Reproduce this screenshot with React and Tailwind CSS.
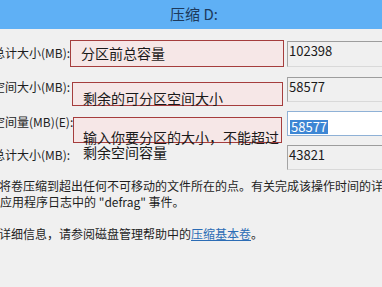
const rows = [
  { label: '压缩前的总计大小(MB):', value: '102398' },
  { label: '可用压缩空间大小(MB):', value: '58577' },
  { label: '输入压缩空间量(MB)(E):', value: '58577' },
  { label: '压缩后的总计大小(MB):', value: '43821' },
];

const Field = ({ value, className = '' }) => (
  <div className={`mt-[1px] w-[110px] shrink-0 border-t border-l border-b border-t-[#9d9d9d] border-l-[#a4a4a4] border-b-[#d9d9d9] bg-[#f0f0f0] pl-[1px] pt-[1px] text-[13px] leading-[16px] text-[#1b1b1b] ${className}`}>
    {value}
  </div>
);

const Label = ({ children, pt }) => (
  <div className={`ml-[-55px] w-[125px] shrink-0 whitespace-nowrap text-[12px] leading-[16px] text-[#1e1e1e] ${pt}`}>
    {children}
  </div>
);

const App = () => {
  return (
    <div className="w-[382px] h-[287px] overflow-hidden bg-[#f0f0f0] flex flex-col font-['Noto_Sans_CJK_SC',sans-serif]">
      {/* title bar */}
      <div className="h-[29px] shrink-0 bg-[#5fb0f5] flex items-center justify-center pl-[6px] text-[15px] text-[#1d3a5c]">
        压缩 D:
      </div>

      <div className="pt-[11px]">
        {/* row 1 */}
        <div className="flex h-[36px]">
          <Label pt="pt-[5px]">{rows[0].label}</Label>
          <div className="w-[217px] shrink-0">
            <div className="w-[214px] h-[27px] border border-[#a53d3d] bg-[#f6e7e7] pl-[10px] flex items-center text-[14px] text-[#1a1a1a]">
              分区前总容量
            </div>
          </div>
          <Field value={rows[0].value} className="h-[26px]" />
        </div>

        {/* row 2 */}
        <div className="flex h-[34px]">
          <Label pt="pt-[3px]">{rows[1].label}</Label>
          <div className="w-[217px] shrink-0">
            <div className="mt-[6px] ml-[2px] w-[211px] h-[24px] border border-[#a53d3d] bg-[#f6e7e7] pl-[10px] pt-[6px] text-[14px] leading-[18px] text-[#1a1a1a]">
              剩余的可分区空间大小
            </div>
          </div>
          <Field value={rows[1].value} className="h-[25px]" />
        </div>

        {/* row 3 */}
        <div className="flex h-[34px]">
          <Label pt="pt-[4px]">{rows[2].label}</Label>
          <div className="w-[217px] shrink-0">
            <div className="mt-[7px] ml-[3px] w-[209px] h-[26px] border border-[#a53d3d] bg-[#f6e7e7] pl-[9px] pt-[12px] text-[14px] leading-[15px] text-[#1a1a1a] whitespace-nowrap">
              输入你要分区的大小，不能超过
              <br />
              剩余空间容量
            </div>
          </div>
          <div className="mt-[1px] w-[110px] h-[25px] shrink-0 border border-[#8fb1d6] bg-white pl-[2px] pt-[1px]">
            <span className="inline-block bg-[#3d86d4] text-white text-[13px] leading-[14px] px-[1px]">
              {rows[2].value}
            </span>
          </div>
        </div>

        {/* row 4 */}
        <div className="flex h-[34px]">
          <Label pt="pt-[3px]">{rows[3].label}</Label>
          <div className="w-[217px] shrink-0" />
          <Field value={rows[3].value} className="h-[25px]" />
        </div>
      </div>

      {/* description */}
      <div className="ml-[-1px] text-[12px] leading-[16px] text-[#1e1e1e] whitespace-nowrap">
        <div>将卷压缩到超出任何不可移动的文件所在的点。有关完成该操作时间的详</div>
        <div className="pl-[1px]">应用程序日志中的 "defrag" 事件。</div>
        <div className="mt-[16px]">
          详细信息，请参阅磁盘管理帮助中的
          <span className="text-[#2b6cb5] underline">压缩基本卷</span>。
        </div>
      </div>
    </div>
  );
};

export default App;
